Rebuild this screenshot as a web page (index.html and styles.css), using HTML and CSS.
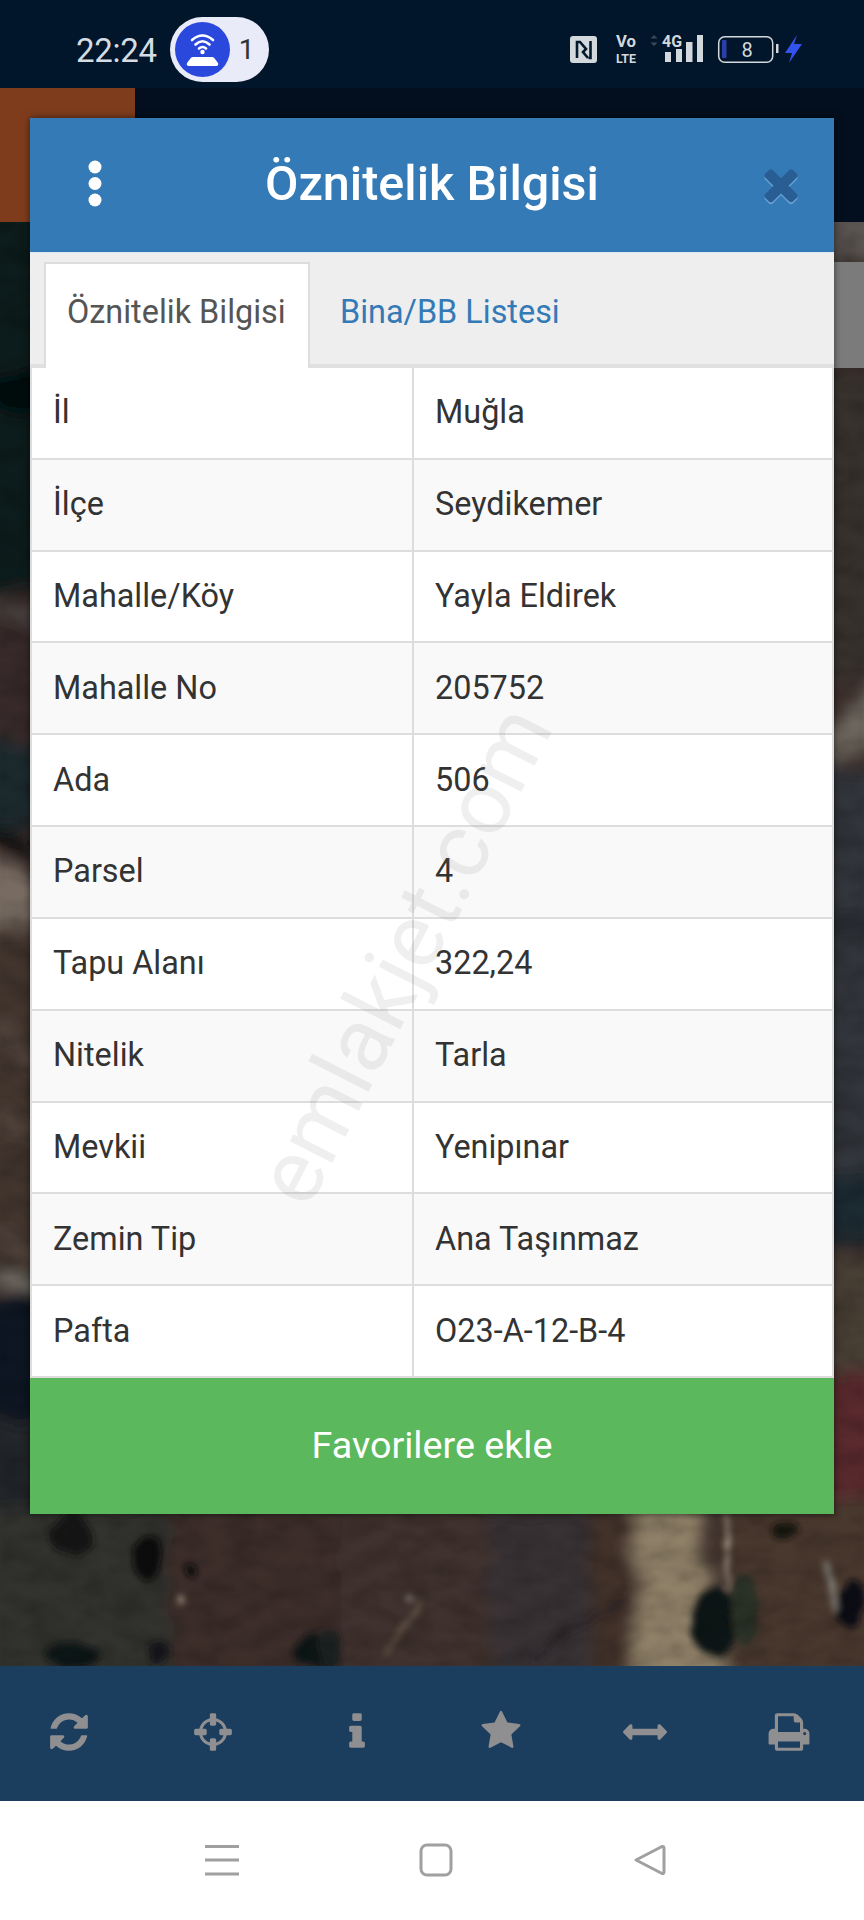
FILE: index.html
```html
<!DOCTYPE html>
<html lang="tr">
<head>
<meta charset="utf-8">
<title>Öznitelik Bilgisi</title>
<link rel="stylesheet" href="styles.css">
</head>
<body>
<div class="screen">
  <header class="status">
    <div class="status-left">
      <span class="time">22:24</span>
      <div class="pill">
        <svg class="pill-icon" viewBox="0 0 55 55">
          <circle cx="27.5" cy="27.5" r="27.5" fill="#2b48dd"/>
          <g fill="none" stroke="#fff" stroke-width="2.6" stroke-linecap="round">
            <path d="M17 18Q27.5 9 38 18"/>
            <path d="M20.5 22.5Q27.5 16 34.5 22.5"/>
            <path d="M24 26.5Q27.5 23.5 31 26.5"/>
          </g>
          <circle cx="27.5" cy="30" r="2.2" fill="#fff"/>
          <path d="M18 35H37Q39 35 40 37L43 41Q44 44 41 44H14Q11 44 12 41L15 37Q16 35 18 35Z" fill="#fff"/>
        </svg>
        <span class="pill-count">1</span>
      </div>
    </div>
    <svg class="status-right" viewBox="568 28 236 42">
      <rect x="570" y="36" width="27" height="27" rx="3" fill="#d3d8dd"/>
      <path d="M577 58V42h3l6 7-3 3 5 6" fill="none" stroke="#04182c" stroke-width="2.6"/>
      <path d="M590.500 41V58h-2" fill="none" stroke="#04182c" stroke-width="2.6"/>
      <text class="st-vo" x="616" y="47" textLength="20" lengthAdjust="spacingAndGlyphs">Vo</text>
      <text class="st-lte" x="616" y="63" textLength="20" lengthAdjust="spacingAndGlyphs">LTE</text>
      <path d="M654 35l3.500 3.500h-7zM654 46l3.500-3.500h-7z" fill="#3b4856"/>
      <text class="st-4g" x="662" y="47" textLength="20" lengthAdjust="spacingAndGlyphs">4G</text>
      <g fill="#d3d8dd">
        <rect x="665" y="52" width="6" height="10"/>
        <rect x="676" y="49" width="6" height="13"/>
        <rect x="686" y="42" width="6.500" height="20"/>
        <rect x="697" y="35" width="6" height="27"/>
      </g>
      <rect x="718.700" y="36.700" width="54" height="25.600" rx="6" fill="none" stroke="#d3d8dd" stroke-width="1.500"/>
      <rect x="722" y="40" width="4.500" height="18" rx="1" fill="#2a3fa8"/>
      <text class="st-batt" x="747" y="57">8</text>
      <rect x="776" y="44" width="2.500" height="9" fill="#d3d8dd"/>
      <path d="M797 35L785 53h7l-3 10 13-19h-8z" fill="#3352ee"/>
    </svg>
  </header>

  <main class="main">
    <div class="appbar"><div class="appbar-logo"></div></div>
    <div class="map">
      <svg class="map-art" viewBox="0 222 864 1444" preserveAspectRatio="none">
        <defs>
          <filter id="soft" filterUnits="userSpaceOnUse" x="-40" y="180" width="950" height="1530">
            <feTurbulence type="fractalNoise" baseFrequency="0.016 0.028" numOctaves="2" seed="7"/>
            <feDisplacementMap in="SourceGraphic" scale="30" xChannelSelector="R" yChannelSelector="G"/>
            <feGaussianBlur stdDeviation="8"/>
          </filter>
          <filter id="softer" filterUnits="userSpaceOnUse" x="-40" y="180" width="950" height="1530">
            <feTurbulence type="fractalNoise" baseFrequency="0.04" numOctaves="2" seed="3"/>
            <feDisplacementMap in="SourceGraphic" scale="12" xChannelSelector="R" yChannelSelector="G"/>
            <feGaussianBlur stdDeviation="3"/>
          </filter>
          <filter id="grain" filterUnits="userSpaceOnUse" x="0" y="222" width="864" height="1444">
            <feTurbulence type="fractalNoise" baseFrequency="0.035 0.06" numOctaves="3" seed="11"/>
            <feColorMatrix values="0 0 0 0 0  0 0 0 0 0  0 0 0 0 0  1.800 0 0 0 -0.600"/>
            <feGaussianBlur stdDeviation="1.500"/>
          </filter>
        </defs>
        <rect x="0" y="222" width="864" height="1444" fill="#3b2e2b"/>
        <g filter="url(#soft)">
          <rect x="-30" y="200" width="80" height="395" fill="#0f1b1c"/>
          <ellipse cx="18" cy="393" rx="26" ry="20" fill="#05090a"/>
          <rect x="-30" y="595" width="80" height="145" fill="#392c2a"/>
          <path d="M-10 605L40 628" stroke="#5d5a55" stroke-width="9"/>
          <rect x="-30" y="740" width="80" height="90" fill="#1f2c2d"/>
          <path d="M-10 825L40 865" stroke="#0b0d0d" stroke-width="12"/>
          <path d="M-30 845L50 885V925H-30Z" fill="#786c62"/>
          <rect x="-30" y="925" width="80" height="365" fill="#43342f"/>
          <path d="M0 1030L40 1070M0 1110L40 1130M0 1240L40 1260" stroke="#675a50" stroke-width="5"/>
          <path d="M0 1282L40 1290" stroke="#8a8a80" stroke-width="9"/>
          <rect x="-30" y="1298" width="80" height="120" fill="#0d1820"/>
          <rect x="-30" y="1420" width="80" height="110" fill="#20262a"/>

          <rect x="815" y="200" width="80" height="62" fill="#5b5653"/>
          <rect x="815" y="368" width="80" height="310" fill="#38302e"/>
          <path d="M815 735L895 665V740L815 768Z" fill="#6e685f"/>
          <rect x="815" y="765" width="80" height="480" fill="#33363a"/>
          <path d="M830 925L880 930" stroke="#0c0d0e" stroke-width="8"/>
          <rect x="815" y="1170" width="80" height="75" fill="#1f2c30"/>
          <rect x="815" y="1258" width="80" height="110" fill="#4a4035"/>
          <rect x="815" y="1368" width="80" height="150" fill="#5a2a2e"/>

          <rect x="-30" y="1505" width="230" height="190" fill="#33302f"/>
          <rect x="170" y="1505" width="180" height="190" fill="#3d2f2a"/>
          <rect x="340" y="1505" width="150" height="190" fill="#41302d"/>
          <rect x="490" y="1505" width="100" height="190" fill="#383335"/>
          <rect x="590" y="1505" width="45" height="190" fill="#43322a"/>
          <path d="M632 1500L700 1500L725 1690H628L640 1590Z" fill="#8f8068"/>
          <rect x="722" y="1500" width="170" height="190" fill="#4a382f"/>
        </g>
        <g filter="url(#softer)">
          <ellipse cx="72" cy="1535" rx="22" ry="20" fill="#121213"/>
          <ellipse cx="148" cy="1558" rx="15" ry="24" fill="#0e0e10"/>
          <ellipse cx="190" cy="1572" rx="7" ry="7" fill="#111"/>
          <ellipse cx="72" cy="1655" rx="26" ry="14" fill="#111315"/>
          <ellipse cx="158" cy="1652" rx="10" ry="12" fill="#17181a"/>
          <ellipse cx="315" cy="1650" rx="20" ry="16" fill="#111315"/>
          <ellipse cx="330" cy="1648" rx="12" ry="20" fill="#1b2123"/>
          <ellipse cx="715" cy="1622" rx="22" ry="36" fill="#101214"/>
          <ellipse cx="745" cy="1610" rx="14" ry="36" fill="#2c3028"/>
          <ellipse cx="852" cy="1603" rx="12" ry="26" fill="#0e1012"/>
          <ellipse cx="785" cy="1530" rx="12" ry="10" fill="#17130f"/>
          <path d="M727 1514L728 1590" stroke="#b7ad9b" stroke-width="3"/>
          <path d="M825 1560L838 1610" stroke="#7d7a72" stroke-width="7"/>
          <path d="M385 1655L420 1600" stroke="#6a5a4d" stroke-width="4"/>
          <ellipse cx="408" cy="1598" rx="4" ry="3" fill="#9b9187"/>
          <ellipse cx="180" cy="1600" rx="2.500" ry="6" fill="#988c7d"/>
          <path d="M625 1600Q560 1625 535 1666" stroke="#2a2426" stroke-width="4" fill="none"/>
        </g>
        <rect x="0" y="222" width="864" height="1444" filter="url(#grain)" opacity=".18"/>
        <rect x="834" y="262" width="30" height="106" fill="#7b7b7b"/>
      </svg>
    </div>

    <section class="modal">
      <div class="modal-head">
        <svg class="dots" viewBox="0 0 14 47"><circle cx="7" cy="7" r="6.500"/><circle cx="7" cy="23.500" r="6.500"/><circle cx="7" cy="40" r="6.500"/></svg>
        <h1 class="modal-title">Öznitelik Bilgisi</h1>
        <svg class="close" viewBox="0 0 1792 1792">
          <path class="close-shade" transform="translate(0 70)" d="M1490 1322q0 40-28 68l-136 136q-28 28-68 28t-68-28l-294-294-294 294q-28 28-68 28t-68-28l-136-136q-28-28-28-68t28-68l294-294-294-294q-28-28-28-68t28-68l136-136q28-28 68-28t68 28l294 294 294-294q28-28 68-28t68 28l136 136q28 28 28 68t-28 68l-294 294 294 294q28 28 28 68z"/>
          <path d="M1490 1322q0 40-28 68l-136 136q-28 28-68 28t-68-28l-294-294-294 294q-28 28-68 28t-68-28l-136-136q-28-28-28-68t28-68l294-294-294-294q-28-28-28-68t28-68l136-136q28-28 68-28t68 28l294 294 294-294q28-28 68-28t68 28l136 136q28 28 28 68t-28 68l-294 294 294 294q28 28 28 68z"/>
        </svg>
      </div>

      <nav class="tabs">
        <a class="tab tab-active">Öznitelik Bilgisi</a>
        <a class="tab">Bina/BB Listesi</a>
      </nav>

      <table class="attrs">
        <tbody>
          <tr><td>İl</td><td>Muğla</td></tr>
          <tr><td>İlçe</td><td>Seydikemer</td></tr>
          <tr><td>Mahalle/Köy</td><td>Yayla Eldirek</td></tr>
          <tr><td>Mahalle No</td><td>205752</td></tr>
          <tr><td>Ada</td><td>506</td></tr>
          <tr><td>Parsel</td><td>4</td></tr>
          <tr><td>Tapu Alanı</td><td>322,24</td></tr>
          <tr><td>Nitelik</td><td>Tarla</td></tr>
          <tr><td>Mevkii</td><td>Yenipınar</td></tr>
          <tr><td>Zemin Tip</td><td>Ana Taşınmaz</td></tr>
          <tr><td>Pafta</td><td>O23-A-12-B-4</td></tr>
        </tbody>
      </table>

      <button class="fav">Favorilere ekle</button>
    </section>
  </main>

  <div class="toolbar">
    <span class="tool"><svg viewBox="0 0 1792 1792"><path d="M1639 1056q0 5-1 7-64 268-268 434.500t-478 166.500q-146 0-282.500-55t-243.500-157l-129 129q-19 19-45 19t-45-19-19-45v-448q0-26 19-45t45-19h448q26 0 45 19t19 45-19 45l-137 137q71 66 161 102t187 36q134 0 250-65t186-179q11-17 53-117 8-23 30-23h192q13 0 22.500 9.500t9.500 22.500zm25-800v448q0 26-19 45t-45 19h-448q-26 0-45-19t-19-45 19-45l138-138q-148-137-349-137-134 0-250 65t-186 179q-11 17-53 117-8 23-30 23h-199q-13 0-22.500-9.500t-9.500-22.500v-7q65-268 270-434.500t480-166.500q146 0 284 55.500t245 156.500l130-129q19-19 45-19t45 19 19 45z"/></svg></span>
    <span class="tool"><svg viewBox="0 0 1792 1792"><path d="M1325 1024h-109q-26 0-45-19t-19-45v-128q0-26 19-45t45-19h109q-32-108-112.500-188.500t-188.500-112.500v109q0 26-19 45t-45 19h-128q-26 0-45-19t-19-45v-109q-108 32-188.500 112.500t-112.500 188.500h109q26 0 45 19t19 45v128q0 26-19 45t-45 19h-109q32 108 112.500 188.500t188.500 112.500v-109q0-26 19-45t45-19h128q26 0 45 19t19 45v109q108-32 188.500-112.500t112.500-188.500zm339-192v128q0 26-19 45t-45 19h-143q-37 161-154.500 278.500t-278.500 154.500v143q0 26-19 45t-45 19h-128q-26 0-45-19t-19-45v-143q-161-37-278.500-154.500t-154.500-278.500h-143q-26 0-45-19t-19-45v-128q0-26 19-45t45-19h143q37-161 154.500-278.500t278.500-154.500v-143q0-26 19-45t45-19h128q26 0 45 19t19 45v143q161 37 278.500 154.500t154.500 278.500h143q26 0 45 19t19 45z"/></svg></span>
    <span class="tool"><svg viewBox="0 0 1792 1792"><path d="M1216 1344v128q0 26-19 45t-45 19h-512q-26 0-45-19t-19-45v-128q0-26 19-45t45-19h64v-384h-64q-26 0-45-19t-19-45v-128q0-26 19-45t45-19h384q26 0 45 19t19 45v576h64q26 0 45 19t19 45zm-128-1152v192q0 26-19 45t-45 19h-256q-26 0-45-19t-19-45v-192q0-26 19-45t45-19h256q26 0 45 19t19 45z"/></svg></span>
    <span class="tool tool-star"><svg viewBox="0 0 1792 1792"><path d="M1728 647q0 22-26 48l-363 354 86 500q1 7 1 20 0 21-10.500 35.500t-30.500 14.500q-19 0-40-12l-449-236-449 236q-22 12-40 12-21 0-31.500-14.500t-10.500-35.500q0-6 2-20l86-500-364-354q-25-27-25-48 0-37 56-46l502-73 225-455q19-41 49-41t49 41l225 455 502 73q56 9 56 46z"/></svg></span>
    <span class="tool"><svg viewBox="0 0 1792 1792"><path d="M1792 896q0 26-19 45l-256 256q-19 19-45 19t-45-19-19-45v-128h-1024v128q0 26-19 45t-45 19-45-19l-256-256q-19-19-19-45t19-45l256-256q19-19 45-19t45 19 19 45v128h1024v-128q0-26 19-45t45-19 45 19l256 256q19 19 19 45z"/></svg></span>
    <span class="tool"><svg viewBox="0 0 1792 1792"><path d="M448 1536h896v-256h-896v256zm0-640h896v-384h-160q-40 0-68-28t-28-68v-160h-640v640zm1152 64q0-26-19-45t-45-19-45 19-19 45 19 45 45 19 45-19 19-45zm128 0v416q0 13-9.500 22.500t-22.500 9.500h-224v160q0 40-28 68t-68 28h-960q-40 0-68-28t-28-68v-160h-224q-13 0-22.500-9.500t-9.500-22.500v-416q0-79 56.500-135.500t135.500-56.500h64v-544q0-40 28-68t68-28h672q40 0 88 20t76 48l152 152q28 28 48 76t20 88v256h64q79 0 135.500 56.500t56.500 135.500z"/></svg></span>
  </div>

  <footer class="sysnav">
    <span class="sysnav-item"><svg viewBox="0 0 34 32"><path d="M0 2.500H34M0 16H34M0 30H34"/></svg></span>
    <span class="sysnav-item"><svg viewBox="0 0 34 34"><rect x="2" y="2" width="30" height="30" rx="6"/></svg></span>
    <span class="sysnav-item"><svg viewBox="0 0 34 34"><path d="M3 17L29 3.500Q31 3 31 5V29Q31 31 29 30.500Z"/></svg></span>
  </footer>

  <div class="watermark">emlakjet.com</div>
</div>
</body>
</html>
```

FILE: styles.css
```css
* { box-sizing: border-box; }
html, body { margin: 0; padding: 0; }
body { font-family: Roboto, "Liberation Sans", sans-serif; color: #333; }

.screen {
  position: relative;
  width: 864px;
  height: 1920px;
  overflow: hidden;
  display: flex;
  flex-direction: column;
  background: #fff;
}

/* status bar */
.status {
  height: 88px;
  flex: none;
  background: #02162b;
  display: flex;
  align-items: center;
  justify-content: space-between;
  padding: 12px 60px 0 76px;
}
.status-left { display: flex; align-items: center; gap: 13px; }
.time { font-size: 33px; color: #d5dce2; letter-spacing: -0.3px; }
.pill {
  width: 99px;
  height: 65px;
  border-radius: 33px;
  background: #e9ecf8;
  display: flex;
  align-items: center;
  padding-left: 5px;
  margin-top: -1px;
}
.pill-icon { width: 55px; height: 55px; }
.pill-count { margin-left: 9px; font-size: 28px; color: #333; }
.status-right { width: 236px; height: 42px; margin-top: -2px; }
.st-vo { font: 700 16px Roboto, sans-serif; fill: #d3d8dd; }
.st-lte { font: 700 13px Roboto, sans-serif; fill: #d3d8dd; }
.st-4g { font: 700 17px Roboto, sans-serif; fill: #d3d8dd; }
.st-batt { font: 400 20px Roboto, sans-serif; fill: #d3d8dd; text-anchor: middle; }

/* app */
.main { position: relative; flex: 1; display: flex; flex-direction: column; min-height: 0; }
.appbar { height: 134px; flex: none; background: #030f1e; }
.appbar-logo { width: 135px; height: 100%; background: #7e3c1c; }
.map { flex: 1; min-height: 0; }
.map-art { display: block; width: 100%; height: 100%; }

/* dialog */
.modal {
  position: absolute;
  top: 30px;
  left: 30px;
  width: 804px;
  display: flex;
  flex-direction: column;
  background: #fff;
  box-shadow: 0 0 7px rgba(0, 0, 0, .55);
}
.modal-head {
  height: 135px;
  background: #337ab7;
  border-bottom: 1px solid #dfe9f1;
  display: grid;
  grid-template-columns: 1fr auto 1fr;
  align-items: center;
  padding: 0 28px 3px;
}
.dots { width: 14px; height: 47px; fill: #fff; margin-left: 30px; }
.modal-title { margin: 0; font-size: 48.500px; font-weight: 500; color: #fff; }
.close { justify-self: end; width: 50px; height: 50px; fill: #285e93; }
.close-shade { fill: #6a9fd0; }

.tabs {
  height: 115px;
  background: #eee;
  border-bottom: 4px solid #e0e0e0;
  display: flex;
  align-items: flex-end;
  padding-left: 14px;
}
.tab {
  font-size: 32.400px;
  color: #337ab7;
  height: 102px;
  margin-bottom: -1px;
  padding: 30px 22px 0 30px;
  white-space: nowrap;
}
.tab-active {
  width: 266px;
  height: 106px;
  margin-bottom: -4px;
  padding: 29px 0 0 21px;
  background: #fff;
  color: #555;
  border: 2px solid #ddd;
  border-bottom: 0;
}

.attrs {
  width: 804px;
  height: 1010px;
  table-layout: fixed;
  border-collapse: separate;
  border-spacing: 0;
  border-left: 2px solid #ddd;
  border-right: 2px solid #ddd;
}
.attrs tr { height: 91.800px; }
.attrs tr:nth-child(even) td { background: #f9f9f9; }
.attrs td {
  padding: 0 0 1px 21px;
  font-size: 32.400px;
  color: #333;
  border-bottom: 2px solid #ddd;
  vertical-align: middle;
}
.attrs td:first-child { width: 382px; border-right: 2px solid #ddd; }

.fav {
  height: 136px;
  border: 0;
  background: #5cb85c;
  color: #fff;
  font-family: Roboto, sans-serif;
  font-size: 37.700px;
  padding: 0 0 2px;
}

/* bottom toolbar */
.toolbar {
  height: 135px;
  flex: none;
  background: #1b3d5e;
  display: grid;
  grid-template-columns: repeat(6, 1fr);
  align-items: center;
  justify-items: center;
  padding-bottom: 3px;
}
.tool { display: flex; margin-right: 6px; }
.tool svg { width: 44px; height: 44px; fill: #8f8f91; }
.tool-star svg { width: 42px; height: 42px; margin-top: -3px; }

/* system navigation */
.sysnav {
  height: 119px;
  flex: none;
  background: #fff;
  display: flex;
  align-items: center;
  justify-content: center;
  padding: 0 0 1px 8px;
}
.sysnav-item { width: 214px; display: flex; justify-content: center; padding-bottom: 1px; }
.sysnav-item svg { width: 34px; height: 34px; fill: none; stroke: #a0a0a2; stroke-width: 3; stroke-linejoin: round; }

.watermark {
  position: absolute;
  left: 404px;
  top: 955px;
  transform: translate(-50%, -50%) rotate(-63deg);
  font-size: 90px;
  font-weight: 400;
  color: rgba(110, 110, 110, .11);
  white-space: nowrap;
  pointer-events: none;
}
```
